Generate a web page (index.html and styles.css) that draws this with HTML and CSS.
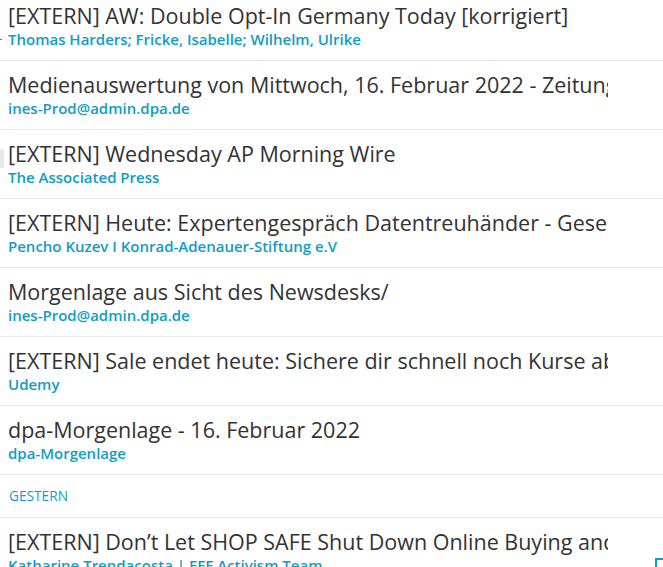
FILE: index.html
```html
<!DOCTYPE html>
<html lang="de">
<head>
<meta charset="utf-8">
<title>Posteingang</title>
<link rel="stylesheet" href="styles.css">
</head>
<body>
<div class="list">
  <div class="row">
    <span class="mark-dot"></span>
    <div class="content">
      <div class="subject">[EXTERN] AW: Double Opt-In Germany Today [korrigiert]</div>
      <div class="sender">Thomas Harders; Fricke, Isabelle; Wilhelm, Ulrike</div>
    </div>
  </div>
  <div class="row">
    <div class="content">
      <div class="subject">Medienauswertung von Mittwoch, 16. Februar 2022 - Zeitungen und Online-Medien</div>
      <div class="sender">ines-Prod@admin.dpa.de</div>
    </div>
  </div>
  <div class="row">
    <span class="mark-bar"></span>
    <div class="content">
      <div class="subject">[EXTERN] Wednesday AP Morning Wire</div>
      <div class="sender">The Associated Press</div>
    </div>
  </div>
  <div class="row">
    <div class="content">
      <div class="subject">[EXTERN] Heute: Expertengespräch Datentreuhänder - Gesellschaftliche Perspektiven</div>
      <div class="sender">Pencho Kuzev I Konrad-Adenauer-Stiftung e.V</div>
    </div>
  </div>
  <div class="row">
    <div class="content">
      <div class="subject">Morgenlage aus Sicht des Newsdesks/</div>
      <div class="sender">ines-Prod@admin.dpa.de</div>
    </div>
  </div>
  <div class="row">
    <div class="content">
      <div class="subject">[EXTERN] Sale endet heute: Sichere dir schnell noch Kurse ab 12,99 €</div>
      <div class="sender">Udemy</div>
    </div>
  </div>
  <div class="row">
    <div class="content">
      <div class="subject">dpa-Morgenlage - 16. Februar 2022</div>
      <div class="sender">dpa-Morgenlage</div>
    </div>
  </div>
  <div class="group">GESTERN</div>
  <div class="row">
    <div class="content">
      <div class="subject">[EXTERN] Don’t Let SHOP SAFE Shut Down Online Buying and Selling</div>
      <div class="sender">Katharine Trendacosta | EFF Activism Team</div>
    </div>
    <span class="flag"></span>
  </div>
</div>
</body>
</html>
```
FILE: styles.css
```css
html, body {
  margin: 0;
  padding: 0;
  background: #ffffff;
  overflow: hidden;
}
body {
  font-family: "Open Sans", "Noto Sans", sans-serif;
  width: 663px;
  height: 567px;
}
.list {
  margin-top: -8px;
  display: flex;
  flex-direction: column;
}
.row {
  position: relative;
  display: flex;
  height: 68px;
  border-bottom: 1px solid #e6e6e6;
  padding-left: 8px;
}
.content {
  width: 600px;
  overflow: hidden;
  padding-top: 10px;
}
.subject {
  font-size: 21.5px;
  line-height: 28px;
  color: #333333;
  white-space: nowrap;
  overflow: hidden;
}
.sender {
  font-size: 15px;
  line-height: 20px;
  font-weight: 600;
  color: #129cc2;
  white-space: nowrap;
  overflow: hidden;
  margin-top: -1px;
}
.group {
  height: 42px;
  border-bottom: 1px solid #e6e6e6;
  padding-left: 9px;
  font-size: 13.7px;
  line-height: 42px;
  color: #129cc2;
}
.mark-dot {
  position: absolute;
  left: 0;
  top: 47px;
  width: 2px;
  height: 1px;
  background: #129cc2;
}
.mark-bar {
  position: absolute;
  left: 0;
  top: 19px;
  width: 4px;
  height: 19px;
  background: #e9e9e9;
}
.flag {
  position: absolute;
  left: 655px;
  top: 40px;
  width: 8px;
  height: 12px;
  border: 2px solid #129cc2;
  border-right: none;
  border-bottom: none;
  box-sizing: border-box;
}
```
